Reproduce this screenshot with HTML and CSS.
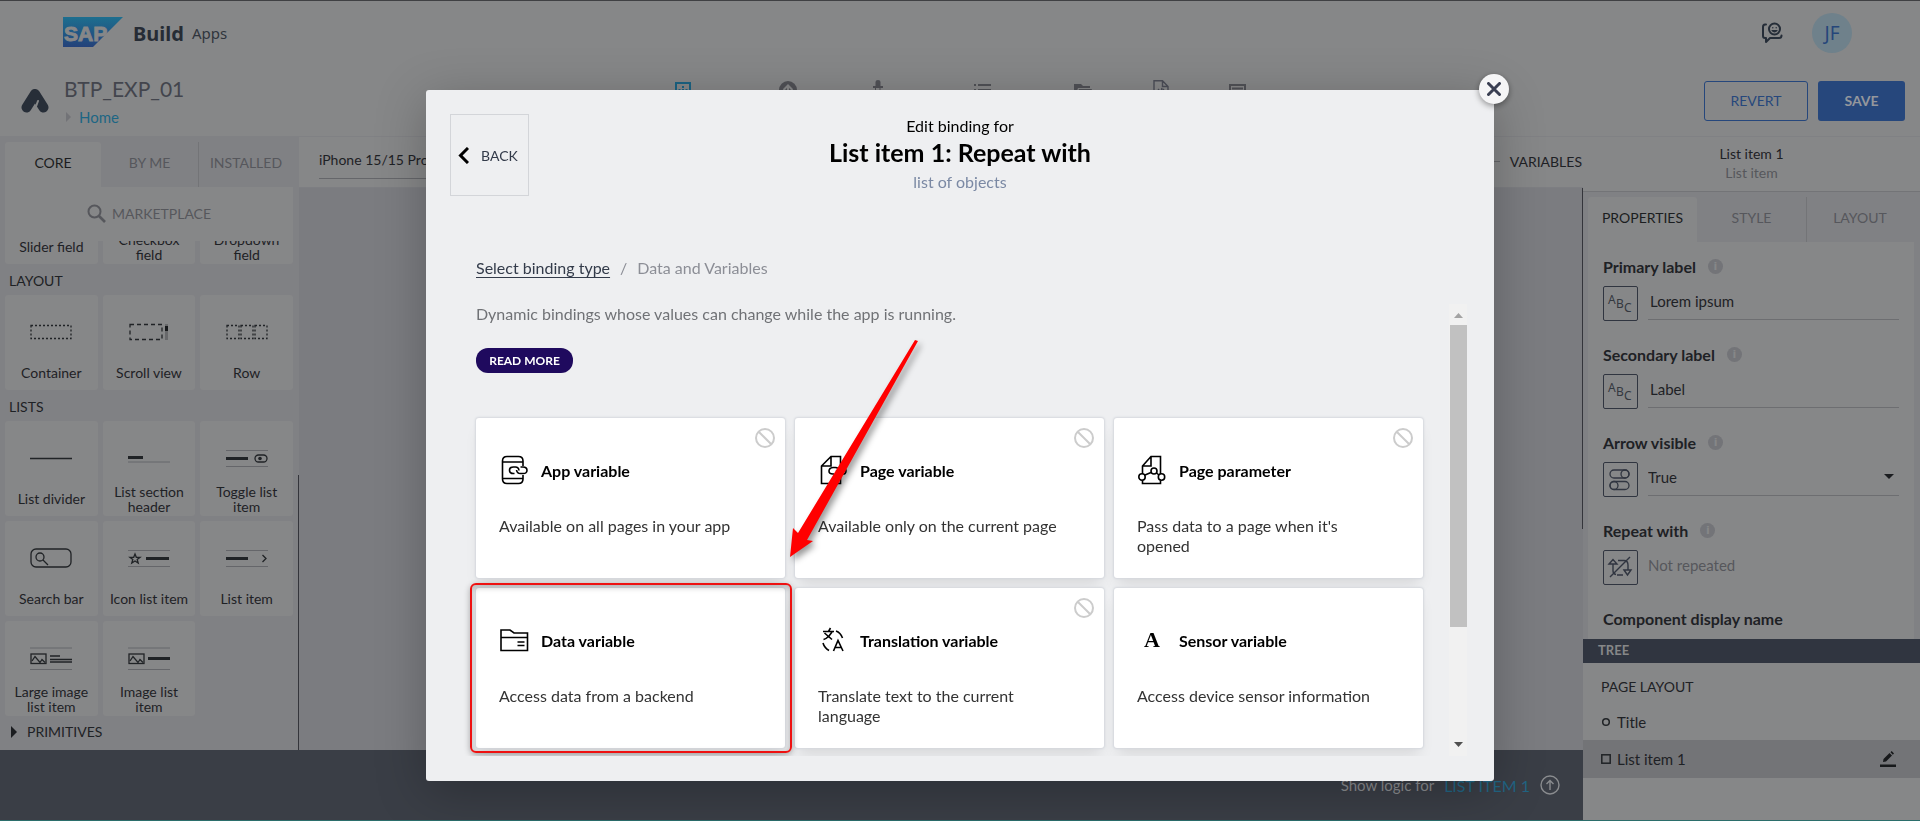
FILE: index.html
```html
<!DOCTYPE html>
<html lang="en">
<head>
<meta charset="utf-8">
<title>SAP Build Apps</title>
<link rel="stylesheet" href="styles.css">
</head>
<body>
<div class="app">
  <header class="header">
    <div class="brand-row">
      <svg class="sap" viewBox="0 0 60 30" role="img" aria-label="SAP">
        <defs><linearGradient id="sapfill" x1="0" y1="0" x2="0" y2="1"><stop offset="0" stop-color="#1d6f8f"/><stop offset="1" stop-color="#24427a"/></linearGradient></defs>
        <path d="M0 0H60L30 30H0Z" fill="url(#sapfill)"/>
        <text x="1" y="24" class="sap-text">SAP</text>
      </svg>
      <span class="brand">Build</span>
      <span class="brand-sub">Apps</span>
      <button class="icon-btn feedback" aria-label="Feedback">
        <svg width="22" height="22" viewBox="0 0 22 22" fill="none" stroke="#252d38" stroke-width="2" stroke-linecap="round" stroke-linejoin="round"><path d="M5 2.500H4Q2 2.500 2 5V14Q2 16 4 16H5V20L9 16H18Q20.500 16 20.500 13.500"/><circle cx="13.500" cy="7" r="5.500"/><path d="M11 8.500Q13.500 11 16 8.500Z" stroke-width="1.200"/><path d="M11.800 5.600v.1M15.200 5.600v.1" stroke-width="1.400"/></svg>
      </button>
      <button class="avatar">JF</button>
    </div>
    <div class="project-row">
      <svg class="mark" viewBox="0 0 28 24" fill="none" stroke="#272e38" stroke-linecap="round" stroke-linejoin="round"><path d="M5.500 18.500L14 5L22.500 18.500" stroke-width="10"/><path d="M13 23L17 12" stroke="#868788" stroke-width="2"/></svg>
      <div class="project">
        <div class="project-name">BTP_EXP_01</div>
        <a class="crumb" href="#"><svg width="5" height="10" viewBox="0 0 5 10"><path d="M0 0L5 5L0 10Z" fill="#727377"/></svg>Home</a>
      </div>
      <nav class="nav" aria-label="Editor">
        <svg viewBox="0 0 20 20" fill="none" stroke="#1b6383" stroke-width="2"><rect x="3" y="3" width="14" height="14"/><path d="M6.500 14V9M10 14V6M13.500 14V9" stroke-dasharray="2 1"/></svg>
        <svg viewBox="0 0 20 20"><circle cx="10" cy="10" r="9" fill="#505156"/><path d="M10 15V6M5.500 10L10 5.500L14.500 10" stroke="#868788" stroke-width="2" fill="none"/></svg>
        <svg viewBox="0 0 20 20" fill="#505156"><path d="M7.500 6V2Q7.500 0 10 0T12.500 2V6H15V8H5V6Z"/><path d="M7.500 8V18M12 8V18" stroke="#505156"/></svg>
        <svg viewBox="0 0 20 20" fill="#505156"><path d="M2 4H4V6H2ZM6 4H19V6H6ZM2 9H4V11H2ZM6 9H19V11H6Z"/></svg>
        <svg viewBox="0 0 20 20" fill="#505156"><path d="M1 4H8L10 6H17V8H5L2 16H1ZM6 9H19L16 16H4Z"/></svg>
        <svg viewBox="0 0 20 20" fill="none" stroke="#4b4d57" stroke-width="1.400"><path d="M3 19V0.800H11.500L17 6.500V19ZM11.500 1V6.500H17M8 9L6 12L8 15M12 9L14 12L12 15M11 8L9 16"/></svg>
        <svg viewBox="0 0 20 20" fill="none" stroke="#505156" stroke-width="2"><path d="M3 5H18V16H3ZM5 8.500H16M5 12H16"/></svg>
      </nav>
      <button class="btn btn-outline">REVERT</button>
      <button class="btn btn-solid">SAVE</button>
    </div>
  </header>

  <div class="workspace">
    <div class="left-side">
      <div class="upper">
        <aside class="palette">
          <div class="tabs palette-tabs">
            <button class="tab active">CORE</button><button class="tab">BY ME</button><button class="tab divided">INSTALLED</button>
          </div>
          <button class="marketplace"><svg width="19" height="19" viewBox="0 0 19 19" fill="none" stroke="#56575c" stroke-width="2"><circle cx="7.500" cy="7.500" r="6"/><path d="M12 12L18 18" stroke-width="2.600"/></svg>MARKETPLACE</button>
          <div class="palette-list">
            <div class="tiles">
              <div class="tile"><svg viewBox="0 0 42 26"></svg><span>Slider field</span></div>
              <div class="tile"><svg viewBox="0 0 42 26"></svg><span>Checkbox field</span></div>
              <div class="tile"><svg viewBox="0 0 42 26"></svg><span>Dropdown field</span></div>
            </div>
            <h3 class="group">LAYOUT</h3>
            <div class="tiles">
              <div class="tile"><svg viewBox="0 0 42 26"><rect x="1" y="6.500" width="40" height="13" class="dash"/></svg><span>Container</span></div>
              <div class="tile"><svg viewBox="0 0 42 26"><rect x="2" y="5.500" width="32" height="15" class="dash wide"/><path d="M38.500 5V21" stroke="#68696b" stroke-width="3"/><path d="M38.500 7V12" stroke="#17191b" stroke-width="3"/></svg><span>Scroll view</span></div>
              <div class="tile"><svg viewBox="0 0 42 26"><rect x="1" y="6.500" width="12" height="13" class="dash"/><rect x="15" y="6.500" width="12" height="13" class="dash"/><rect x="29" y="6.500" width="12" height="13" class="dash"/></svg><span>Row</span></div>
            </div>
            <h3 class="group">LISTS</h3>
            <div class="tiles">
              <div class="tile"><svg viewBox="0 0 42 26"><path d="M0 13.500H42" class="bar thin"/></svg><span>List divider</span></div>
              <div class="tile"><svg viewBox="0 0 42 26"><path d="M0 12.500H15" class="bar"/><path d="M0 17H42" class="rule"/></svg><span>List section header</span></div>
              <div class="tile"><svg viewBox="0 0 42 26"><path d="M0 5.500H42M0 21.500H42" class="rule"/><path d="M0 13.500H22" class="bar"/><rect x="29" y="10" width="12" height="7" rx="3.500" class="line"/><circle cx="34" cy="13.500" r="1.800" fill="#202326"/></svg><span>Toggle list item</span></div>
              <div class="tile"><svg viewBox="0 0 42 26"><rect x="1" y="4" width="40" height="18" rx="5" class="line"/><circle cx="10" cy="12" r="4" class="line"/><path d="M13 15L18 20" class="line"/></svg><span>Search bar</span></div>
              <div class="tile"><svg viewBox="0 0 42 26"><path d="M0 5.500H42M0 21.500H42" class="rule"/><path d="M18 13.500H41" class="bar"/><path d="M7 9L8.300 12.300H12L9.200 14.500L10.200 18L7 16L3.800 18L4.800 14.500L2 12.300H5.700Z" class="line"/></svg><span>Icon list item</span></div>
              <div class="tile"><svg viewBox="0 0 42 26"><path d="M0 5.500H42M0 21.500H42" class="rule"/><path d="M0 13.500H22" class="bar"/><path d="M36.500 10L40 13.500L36.500 17" class="line"/></svg><span>List item</span></div>
              <div class="tile"><svg viewBox="0 0 42 26"><path d="M0 3H42M0 24.500H42" class="rule"/><rect x="1" y="9" width="15" height="9.500" class="line"/><path d="M2 16L5 11.500L10 17.500L12 14.500L15 17.500" class="line"/><path d="M20 11H30M20 14.500H42M20 17H42" class="bar thin"/></svg><span>Large image list item</span></div>
              <div class="tile"><svg viewBox="0 0 42 26"><path d="M0 3H42M0 24.500H42" class="rule"/><rect x="1" y="9" width="15" height="9.500" class="line"/><path d="M2 16L5 11.500L10 17.500L12 14.500L15 17.500" class="line"/><path d="M20 13.500H42" class="bar"/></svg><span>Image list item</span></div>
            </div>
            <h3 class="group closed"><svg width="6" height="12" viewBox="0 0 6 12"><path d="M0 0L6 6L0 12Z" fill="#1b1d20"/></svg>PRIMITIVES</h3>
          </div>
        </aside>
        <main class="stage">
          <div class="stage-bar">
            <select class="device" aria-label="Preview device"><option>iPhone 15/15 Pro</option></select>
            <div class="mode"><span class="dashmark"></span>VARIABLES</div>
          </div>
          <div class="canvas"></div>
        </main>
      </div>
      <footer class="logic">
        <span>Show logic for</span><a href="#">LIST ITEM 1</a>
        <svg width="20" height="20" viewBox="0 0 20 20" fill="none" stroke="#8a8c8f" stroke-width="1.400"><circle cx="10" cy="10" r="9"/><path d="M10 15V5.500M6.500 9L10 5.500L13.500 9"/></svg>
      </footer>
    </div>

    <aside class="inspector">
      <div class="selected"><div>List item 1</div><div class="muted">List item</div></div>
      <div class="tabs inspector-tabs">
        <button class="tab active">PROPERTIES</button><button class="tab">STYLE</button><button class="tab divided">LAYOUT</button>
      </div>
      <div class="props">
        <div class="prop">
          <label for="primary">Primary label <i class="info">i</i></label>
          <div class="field"><button class="bind" aria-label="Text binding"><svg viewBox="0 0 33 33" class="abc"><text x="4" y="17">A</text><text x="12" y="21">B</text><text x="20" y="25">C</text></svg></button><input id="primary" value="Lorem ipsum"></div>
        </div>
        <div class="prop">
          <label for="secondary">Secondary label <i class="info">i</i></label>
          <div class="field"><button class="bind" aria-label="Text binding"><svg viewBox="0 0 33 33" class="abc"><text x="4" y="17">A</text><text x="12" y="21">B</text><text x="20" y="25">C</text></svg></button><input id="secondary" value="Label"></div>
        </div>
        <div class="prop">
          <label for="arrow">Arrow visible <i class="info">i</i></label>
          <div class="field"><button class="bind" aria-label="Toggle binding"><svg viewBox="0 0 33 33" fill="none" stroke="#303540" stroke-width="1.300"><rect x="6" y="7" width="19" height="8" rx="4"/><circle cx="21" cy="11" r="4"/><rect x="6" y="18.500" width="19" height="8" rx="4"/><circle cx="10" cy="22.500" r="4"/></svg></button>
            <span class="pick"><select id="arrow"><option>True</option></select><svg width="10" height="5" viewBox="0 0 10 5"><path d="M0 0H10L5 5Z" fill="#1b1d20"/></svg></span></div>
        </div>
        <div class="prop">
          <label for="repeat">Repeat with <i class="info">i</i></label>
          <div class="field"><button class="bind" aria-label="Repeat binding"><svg viewBox="0 0 33 33" fill="none" stroke="#303540" stroke-width="1.400"><path d="M5 13L9 8.500L13 13ZM9 13V20Q9 23 12 23.500M14 9.500H20Q24 9.500 24 14V19M20 19L23.500 24L27 19ZM13 24H19M6 26L26 6"/></svg></button><input id="repeat" class="plain" placeholder="Not repeated"></div>
        </div>
        <div class="prop"><label>Component display name</label></div>
      </div>
      <section class="tree">
        <h2>TREE</h2>
        <h3>PAGE LAYOUT</h3>
        <div class="node"><svg width="10" height="10" viewBox="0 0 10 10" fill="none" stroke="#202326" stroke-width="1.500"><circle cx="5" cy="5" r="3.300"/></svg>Title</div>
        <div class="node current"><svg width="10" height="10" viewBox="0 0 10 10" fill="none" stroke="#202326" stroke-width="1.500"><rect x="0.800" y="0.800" width="8.400" height="8.400"/></svg>List item 1
          <button class="icon-btn edit" aria-label="Rename"><svg width="16" height="16" viewBox="0 0 16 16" fill="#17191b"><path d="M0 13.500H16V16H0ZM3 11L3.500 8L9.500 2L12 4.500L6 10.500ZM10.500 1.200L11.700 0L14 2.500L12.800 3.700Z"/></svg></button>
        </div>
      </section>
    </aside>
  </div>
</div>

<div class="overlay">
  <div class="modal" role="dialog" aria-labelledby="dlg-title">
    <button class="close" aria-label="Close"><svg width="14" height="14" viewBox="0 0 14 14" stroke="#3a3f52" stroke-width="3" stroke-linecap="round"><path d="M1.500 1.500L12.500 12.500M12.500 1.500L1.500 12.500"/></svg></button>
    <div class="modal-head">
      <button class="back"><svg width="11" height="17" viewBox="0 0 11 17" fill="none" stroke="#000" stroke-width="3"><path d="M10 1L2.500 8.500L10 16"/></svg>BACK</button>
      <div class="titles">
        <div class="over">Edit binding for</div>
        <h1 id="dlg-title">List item 1: Repeat with</h1>
        <div class="under">list of objects</div>
      </div>
    </div>
    <nav class="path" aria-label="Binding type"><a href="#">Select binding type</a><span>/</span><span>Data and Variables</span></nav>
    <div class="scroller">
      <div class="content">
        <p class="lead">Dynamic bindings whose values can change while the app is running.</p>
        <button class="more">READ MORE</button>
        <div class="cards">
          <button class="card">
            <svg class="ban" viewBox="0 0 20 20"><circle cx="10" cy="10" r="9"/><path d="M3.700 3.700L16.300 16.300"/></svg>
            <span class="card-title"><svg viewBox="0 0 30 30"><path d="M24 11V6Q24 1.500 19.500 1.500H8Q3.500 1.500 3.500 6V24Q3.500 28.500 8 28.500H19.500Q24 28.500 24 24V20M3.500 7H24M3.500 23.500H24"/><path d="M15.500 18.500H14.500Q10.500 18.500 10.500 15.300T14.500 12H16.500Q19.500 12 20 15.500M21.500 12H24Q28 12 28 15.300T24 18.500H21.500Q18 18.500 17.500 15"/></svg>App variable</span>
            <span class="card-text">Available on all pages in your app</span>
          </button>
          <button class="card">
            <svg class="ban" viewBox="0 0 20 20"><circle cx="10" cy="10" r="9"/><path d="M3.700 3.700L16.300 16.300"/></svg>
            <span class="card-title"><svg viewBox="0 0 30 30"><path d="M22.500 11V1.500H13L3.500 11V28.500H22.500V20M13 1.500V11H3.500"/><path d="M16 19H15Q11 19 11 16T15 12.500H17.500Q20.500 12.500 20.500 16M22 12.500H24Q28 12.500 28 16T24 19H22.500Q19 19 18.500 15.500"/></svg>Page variable</span>
            <span class="card-text">Available only on the current page</span>
          </button>
          <button class="card">
            <svg class="ban" viewBox="0 0 20 20"><circle cx="10" cy="10" r="9"/><path d="M3.700 3.700L16.300 16.300"/></svg>
            <span class="card-title"><svg viewBox="0 0 30 30"><path d="M5.500 19V11L14 1.500H23.500V19M14 1.500V11H5.500M5.500 25.500V28.500H23.500V25.500M8 20L14 17.500M19.500 18L22 20"/><circle cx="17" cy="16" r="3"/><circle cx="5" cy="22" r="3.200"/><circle cx="24.500" cy="22" r="3.200"/></svg>Page parameter</span>
            <span class="card-text">Pass data to a page when it's opened</span>
          </button>
          <button class="card marked">
            <span class="card-title"><svg viewBox="0 0 30 30"><path d="M2 25.500V5H11L15 8H28.500V25.500ZM2 12.500H28.500M18.500 17H25.500M18.500 20.500H25.500"/></svg>Data variable</span>
            <span class="card-text">Access data from a backend</span>
          </button>
          <button class="card">
            <svg class="ban" viewBox="0 0 20 20"><circle cx="10" cy="10" r="9"/><path d="M3.700 3.700L16.300 16.300"/></svg>
            <span class="card-title"><svg viewBox="0 0 30 30"><path d="M5 6.500H16M12.500 3L10.500 6.500M6.500 8L14 14.500M14 7L11 11Q8 14 5.500 14.500M18 6Q22.500 7.500 24.500 13M5 18Q6.500 23 11 25.500M15.500 26L20 15.500L25 26M17 22.500H23"/></svg>Translation variable</span>
            <span class="card-text">Translate text to the current language</span>
          </button>
          <button class="card">
            <span class="card-title"><span class="glyph">A</span>Sensor variable</span>
            <span class="card-text">Access device sensor information</span>
          </button>
          <svg class="pointer" viewBox="0 0 136 226"><path d="M127 5L130 6L19 205L25 206L2 222L5 193L10 198Z"/></svg>
        </div>
      </div>
      <div class="track"><svg width="9" height="5" viewBox="0 0 9 5"><path d="M0 5H9L4.500 0Z" fill="#a3a3a3"/></svg><div class="thumb"></div><svg width="9" height="5" viewBox="0 0 9 5"><path d="M0 0H9L4.500 5Z" fill="#505050"/></svg></div>
    </div>
  </div>
</div>
</body>
</html>
```

FILE: styles.css
```css
* { box-sizing: border-box; }

body {
  margin: 0;
  font-family: Lato, "Open Sans", sans-serif;
  font-size: 14px;
  color: #1e2125;
}

button, input, select { font: inherit; color: inherit; }
button { padding: 0; border: 0; background: none; }
h1, h2, h3, p { margin: 0; font-weight: 400; }
a { text-decoration: none; }

.app {
  display: flex;
  flex-direction: column;
  height: 100vh;
  background: #868788;
  border-top: 1px solid #3f4043;
  border-bottom: 1px solid #2b6e6b;
}

/* header */
.header { height: 136px; border-bottom: 1px solid #808184; }
.brand-row { display: flex; align-items: center; height: 64px; padding: 0 68px 0 63px; }
.sap { width: 60px; height: 30px; margin: 0 10px 2px 0; }
.sap-text { font: 700 21px "Liberation Sans", sans-serif; fill: #868788; stroke: #868788; stroke-width: 1; }
.brand { font: 700 20px "Noto Sans", sans-serif; color: #262c35; margin-right: 8px; }
.brand-sub { font: 400 15px "Noto Sans", sans-serif; color: #30353d; }
.icon-btn { display: flex; }
.feedback { margin-left: auto; }
.avatar {
  width: 40px; height: 40px; margin-left: 29px; border-radius: 50%;
  background: #6f818b; color: #25467a; font: 400 19px "Noto Sans", sans-serif;
}
.project-row { display: flex; align-items: center; height: 71px; padding: 0 15px 0 21px; gap: 10px; }
.mark { width: 28px; height: 24px; }
.project { width: 300px; padding: 4px 5px 0; }
.project-name { font-size: 21px; line-height: 28px; color: #43454d; }
.crumb { display: flex; align-items: center; gap: 8px; padding-left: 2px; font-size: 15px; line-height: 28px; color: #1d6684; }
.nav { flex: 1; display: flex; padding-left: 304px; align-items: center; }
.nav svg { width: 20px; height: 20px; margin-bottom: 22px; margin-right: 79px; }
.nav svg + svg + svg { margin-right: 84px; }
.nav svg:nth-child(1) { margin-right: 85px; }
.nav svg:nth-child(2) { margin-right: 70px; }
.nav svg:nth-child(4) { margin-right: 81px; }
.nav svg:nth-child(5) { margin-right: 58px; }
.nav svg:nth-child(6) { margin-right: 56px; }
.btn { height: 40px; border-radius: 3px; font-size: 14px; }
.btn-outline { width: 104px; border: 1px solid #26477c; color: #26477c; }
.btn-solid { width: 87px; background: #26477c; color: #94979c; font-weight: 700; }

/* workspace */
.workspace { flex: 1; display: flex; min-height: 0; }
.left-side { flex: 1; display: flex; flex-direction: column; min-width: 0; }
.upper { flex: 1; display: flex; min-height: 0; }

.tabs { display: grid; height: 50px; padding-top: 5px; background: #808184; }
.tab { padding-bottom: 4px; color: #56575c; font-size: 14px; }
.tab.active { background: #868788; color: #1b1d20; border-radius: 3px 3px 0 0; }
.tab.divided { border-left: 1px solid #737477; }

.palette {
  position: relative; width: 299px; padding: 0 6px 0 5px;
  display: flex; flex-direction: column; background: #808184;
}
.palette::after {
  content: ""; position: absolute; right: 0; bottom: 0;
  width: 1px; height: 275px; background: #34353b;
}
.palette-tabs { grid-template-columns: 96px 97px 95px; }
.marketplace {
  display: flex; align-items: center; justify-content: center; gap: 6px;
  height: 54px; padding-bottom: 2px; flex: none; background: #868788; color: #56575c;
}
.palette-list { flex: 1; min-height: 0; overflow: hidden; display: flex; flex-direction: column; justify-content: flex-end; }
.tiles { display: grid; grid-template-columns: repeat(3, 1fr); gap: 5px; flex: none; }
.tile {
  height: 95px; padding-top: 24px; border-radius: 3px; background: #868788;
  display: flex; flex-direction: column; align-items: center;
}
.tile svg { width: 42px; height: 26px; margin-bottom: 11px; fill: none; flex: none; }
.tile span { display: flex; align-items: center; height: 33px; padding: 0 4px; line-height: 15px; text-align: center; }
.dash { stroke: #202326; stroke-width: 1.3; stroke-dasharray: 2 2; }
.dash.wide { stroke-dasharray: 4 3; }
.line { stroke: #202326; stroke-width: 1.3; }
.bar { stroke: #202326; stroke-width: 3; }
.bar.thin { stroke-width: 1.6; }
.rule { stroke: #65666a; stroke-width: 1; }
.group { display: flex; align-items: center; height: 31px; padding: 1px 4px 0; font-size: 14px; flex: none; }
.group.closed { height: 34px; padding: 0 6px 3px; gap: 10px; }

.stage { flex: 1; display: flex; flex-direction: column; }
.stage-bar {
  display: flex; justify-content: space-between; align-items: center;
  height: 51px; padding-left: 20px; border-bottom: 1px solid #7d7e82;
}
.device {
  appearance: none; width: 200px; height: 34px; border: 0; border-bottom: 1px solid #65666a;
  background: none; padding: 0 0 4px; font-size: 14px; border-radius: 0;
}
.mode { display: flex; align-items: center; gap: 10px; padding: 0 1px 2px 0; }
.dashmark { width: 20px; height: 1px; background: #65666a; }
.canvas { flex: 1; position: relative; background: #7b7c80; }
.canvas::after { content: ""; position: absolute; right: 0; top: 0; width: 1px; height: 341px; background: #34353b; }

.logic {
  display: flex; align-items: center; justify-content: flex-end; gap: 10px;
  height: 70px; padding-right: 23px; background: #3a3e46; color: #8a8c8f; font-size: 15px;
}
.logic a { color: #216584; font-size: 16px; }

/* inspector */
.inspector { width: 337px; display: flex; flex-direction: column; }
.selected { height: 55px; padding-top: 7px; text-align: center; line-height: 19px; border-bottom: 1px solid #737477; }
.muted { color: #56575c; }
.inspector-tabs { grid-template-columns: 109px 109px 1fr; padding: 5px 7px 0 5px; flex: none; }
.props {
  position: relative; flex: 1; min-height: 0; overflow: hidden;
  padding: 15px 15px 0; border: solid #808184; border-width: 0 6px 0 5px;
}
.prop { height: 88px; }
.prop label { display: flex; align-items: center; gap: 12px; height: 18px; font-weight: 700; font-size: 16px; }
.info {
  width: 15px; height: 15px; border-radius: 50%; background: #737478; color: #868788;
  font: 700 11px/15px "DejaVu Sans", sans-serif; text-align: center;
}
.field { display: flex; gap: 10px; margin-top: 11px; height: 35px; }
.bind { width: 35px; height: 35px; flex: none; border: 1px solid #303540; border-radius: 2px; }
.bind svg { display: block; width: 33px; height: 33px; }
.abc { font: 12px "Noto Sans", sans-serif; fill: #34383f; }
.field input, .pick { flex: 1; min-width: 0; height: 34px; border: 0; border-bottom: 1px solid #6d6e71; background: none; }
.field input { padding: 0 2px 4px; font-size: 15px; }
.field input.plain { border: 0; padding-left: 0; }
.plain::placeholder { color: #56575c; }
.pick { display: flex; align-items: center; padding: 0 5px 4px 0; }
.pick select { flex: 1; appearance: none; border: 0; background: none; padding: 0; font-size: 15px; }

.tree { height: 181px; flex: none; }
.tree h2 { height: 24px; padding-left: 15px; background: #303540; color: #868788; font-size: 13px; line-height: 22px; font-weight: 700; }
.tree h3 { padding: 14px 18px 7px; font-size: 14px; line-height: 20px; }
.node { display: flex; align-items: center; gap: 6px; height: 36px; padding: 0 24px 0 18px; font-size: 15px; }
.node.current { height: 38px; background: #737477; }
.edit { margin-left: auto; }

/* dialog */
.overlay { position: fixed; inset: 0; display: flex; justify-content: center; padding: 90px 20px 40px; }
.modal {
  position: relative; width: 1068px; display: flex; flex-direction: column;
  padding: 24px 0 25px; background: #eeeff1; border-radius: 3px; color: #000;
  box-shadow: 0 10px 50px rgba(0, 0, 0, .25);
}
.close {
  position: absolute; top: -16px; right: -15px; width: 30px; height: 30px; border-radius: 50%;
  display: grid; place-items: center; background: #f5f5f6; box-shadow: 0 2px 6px rgba(0, 0, 0, .4);
}
.modal-head { display: grid; grid-template-columns: 79px 1fr 79px; padding: 0 24px; }
.back {
  display: flex; align-items: center; justify-content: center; gap: 12px; height: 82px; padding-right: 3px;
  border: 1px solid #d3d5d9; color: #333b4a;
}
.titles { text-align: center; }
.over { font-size: 16px; line-height: 24px; }
h1 { font-size: 25px; line-height: 28px; font-weight: 700; }
.under { font-size: 16px; line-height: 32px; color: #7b89a4; }
.path { display: flex; gap: 10px; margin: 58px 50px 24px; font-size: 16px; line-height: 24px; color: #8c8e96; }
.path a { color: #333b4a; text-decoration: underline; text-underline-offset: 3px; }
.scroller { flex: 1; min-height: 0; display: flex; padding: 0 27px 0 30px; }
.content { flex: 1; overflow: hidden; padding: 0 26px 0 20px; }
.lead { font-size: 16px; line-height: 20px; color: #707276; }
.more {
  display: block; width: 97px; height: 25px; margin: 24px 0 45px; border-radius: 12px;
  background: #1f0a5e; color: #fff; font-size: 12px; font-weight: 700;
}
.cards { position: relative; display: grid; grid-template-columns: repeat(3, 1fr); gap: 10px; }
.card {
  position: relative; height: 160px; padding: 34px 23px 0; text-align: left; background: #fff;
  border-radius: 3px; box-shadow: 0 0 2px 1px #d5d8de, 0 10px 14px -4px rgba(0, 0, 0, .1);
  display: flex; flex-direction: column; justify-content: flex-start;
}
.ban { position: absolute; top: 10px; right: 10px; width: 20px; height: 20px; fill: none; stroke: #ccc; stroke-width: 2; }
.card-title { display: flex; align-items: center; gap: 12px; height: 36px; font-size: 16px; font-weight: 700; }
.card-title svg { width: 30px; height: 30px; fill: none; stroke: #000; stroke-width: 1.6; }
.glyph { width: 30px; text-align: center; font: 700 22px "Liberation Serif", serif; }
.card-text { margin-top: 28px; padding-right: 20px; font-size: 16px; line-height: 20px; color: #333; }
.marked::after {
  content: ""; position: absolute; inset: -5px -7px -5px -6px; border: 2px solid #ee1111; border-radius: 6px;
  box-shadow: 0 2px 6px rgba(0, 0, 0, .3), inset 0 2px 6px rgba(0, 0, 0, .25);
}
.marked { z-index: 1; }
.pointer {
  position: absolute; z-index: 2; left: 312px; top: -83px; width: 136px; height: 226px;
  fill: #f00; filter: drop-shadow(3px 4px 3px rgba(0, 0, 0, .4)); pointer-events: none;
}
.track {
  width: 18px; display: flex; flex-direction: column; align-items: center; justify-content: space-between;
  padding: 9px 0; background: #f1f1f1;
}
.thumb { width: 17px; height: 302px; margin: 7px 0 auto; background: #c1c1c1; }
```
